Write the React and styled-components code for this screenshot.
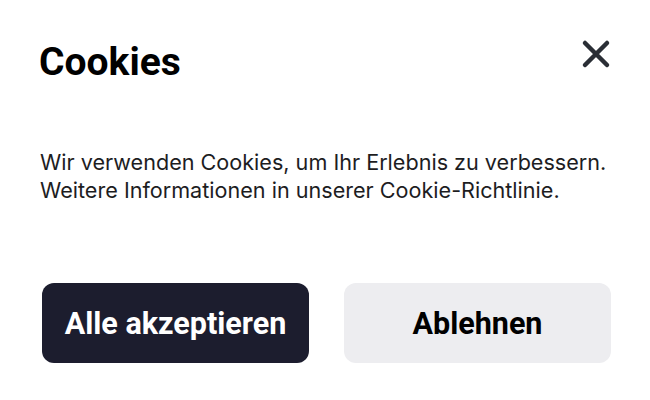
import React from "react";
import styled, {createGlobalStyle} from "styled-components";

const GlobalStyle = createGlobalStyle`
  html, body {
    margin: 0;
    padding: 0;
    background: #ffffff;
  }
`

const Dialog = styled.div`
  width: 650px;
  height: 400px;
  box-sizing: border-box;
  padding: 36px 39px 0 41px;
  display: flex;
  flex-direction: column;
  background: #ffffff;
`

const Header = styled.div`
  display: flex;
  justify-content: space-between;
  align-items: flex-start;
`

const Title = styled.h1`
  margin: 0;
  font-family: Roboto, "Liberation Sans", sans-serif;
  font-weight: 700;
  font-size: 39px;
  line-height: 52px;
  color: #000000;
  margin-left: -2px;
`

const CloseButton = styled.button`
  border: none;
  background: none;
  padding: 0;
  margin-top: 2px;
  margin-right: -1px;
  width: 32px;
  height: 32px;
  display: flex;
  align-items: center;
  justify-content: center;
  cursor: pointer;
`

const Message = styled.p`
  margin: 60px 0 0 -1px;
  font-family: Inter, "Noto Sans", sans-serif;
  font-size: 21.6px;
  line-height: 28px;
  color: #1d1d1f;
`

const Actions = styled.div`
  margin-top: 79px;
  display: grid;
  grid-template-columns: 1fr 1fr;
  gap: 35px;
  padding-left: 1px;
`

const Button = styled.button`
  height: 80px;
  border: none;
  border-radius: 12px;
  font-family: Roboto, "Liberation Sans", sans-serif;
  font-weight: 700;
  font-size: 30.5px;
  background: ${p => p.$primary ? '#1c1d2e' : '#ededf0'};
  color: ${p => p.$primary ? '#ffffff' : '#000000'};
  cursor: pointer;
`

export default function App() {
  return <>
    <GlobalStyle/>
    <Dialog>
      <Header>
        <Title>Cookies</Title>
        <CloseButton aria-label="Schließen">
          <svg width="32" height="32" viewBox="0 0 32 32">
            <path d="M5 5 L27 27 M27 5 L5 27" stroke="#2a2e35" strokeWidth="4.5" strokeLinecap="round" fill="none"/>
          </svg>
        </CloseButton>
      </Header>
      <Message>
        Wir verwenden Cookies, um Ihr Erlebnis zu verbessern.<br/>
        Weitere Informationen in unserer Cookie-Richtlinie.
      </Message>
      <Actions>
        <Button $primary>Alle akzeptieren</Button>
        <Button>Ablehnen</Button>
      </Actions>
    </Dialog>
  </>
}
